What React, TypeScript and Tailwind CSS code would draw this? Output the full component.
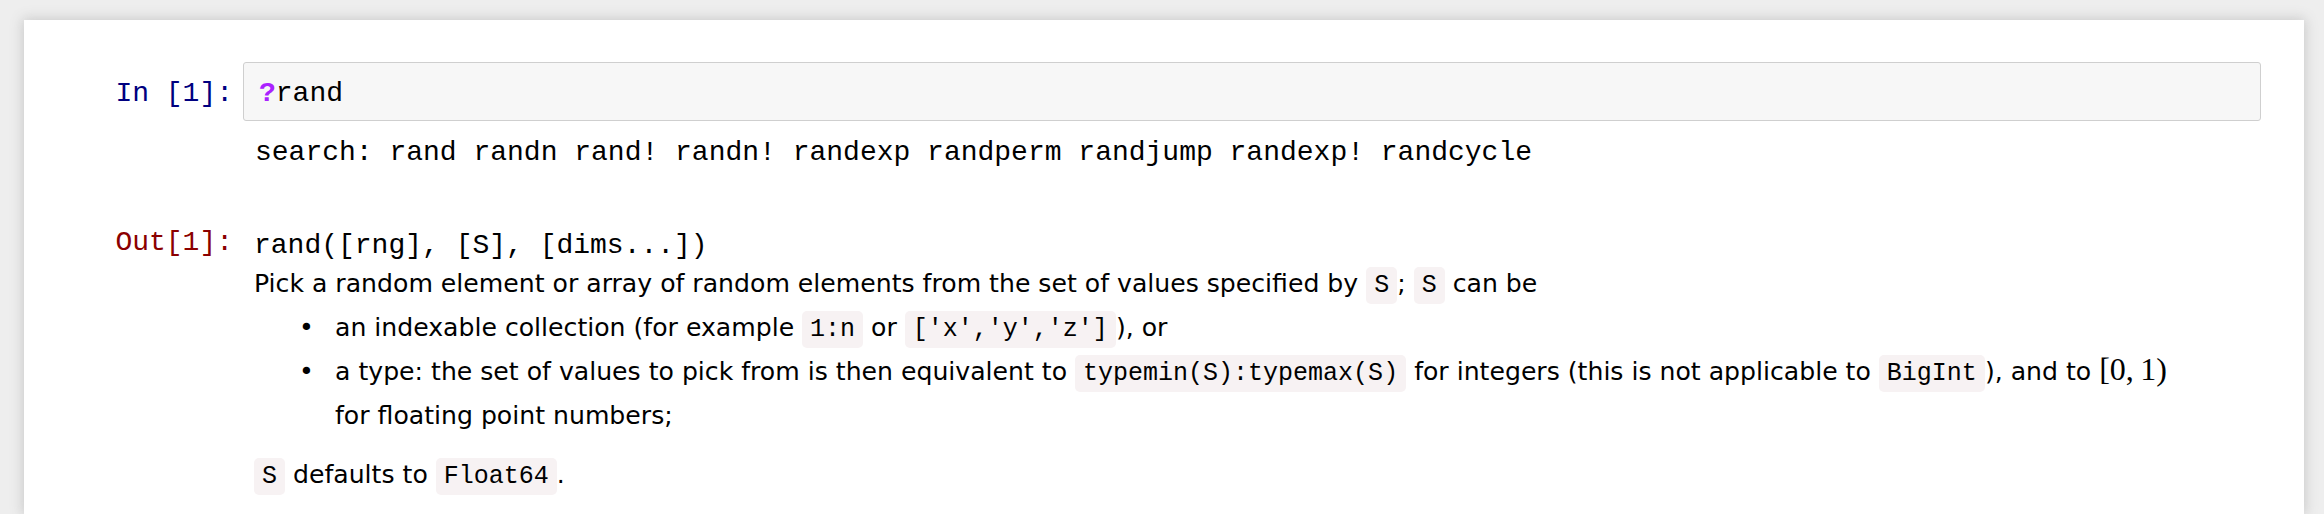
import React from "react";

const mono = "[font-family:'Liberation_Mono',monospace]";
const sans = "[font-family:'DejaVu_Sans',sans-serif]";

function Code({ children }: { children: React.ReactNode }) {
  return (
    <span className="[font-family:'Liberation_Mono',monospace] text-[25px] bg-[#f7f2f3] rounded-[5px] px-[8px] py-[4px]">
      {children}
    </span>
  );
}

export default function App() {
  return (
    <div className="h-[514px] overflow-hidden bg-[#eeeeee] pt-[20px]">
      <div className="ml-[24px] w-[2280px] h-[494px] bg-white shadow-[0_0_12px_1px_rgba(87,87,87,0.25)] pt-[42px] pr-[43px]">
        {/* Input cell */}
        <div className="flex">
          <div
            className={`w-[219px] shrink-0 pr-[10px] pt-[15px] text-right text-[28px] leading-[34px] text-[#000080] ${mono}`}
          >
            In [1]:
          </div>
          <div className="flex-1 border border-[#cfcfcf] bg-[#f7f7f7] rounded-[3px] pl-[15px] pt-[14px] pb-[9px]">
            <div className={`text-[28px] leading-[34px] text-black ${mono}`}>
              <span className="font-bold text-[#aa22ff]">?</span>rand
            </div>
          </div>
        </div>

        {/* stream output */}
        <div className="flex mt-[15px]">
          <div className="w-[219px] shrink-0" />
          <div className={`pl-[12px] text-[28px] leading-[34px] text-black ${mono}`}>
            search: rand randn rand! randn! randexp randperm randjump randexp! randcycle
          </div>
        </div>

        {/* Out cell */}
        <div className="flex mt-[59px]">
          <div
            className={`w-[219px] shrink-0 pr-[10px] -mt-[3px] text-right text-[28px] leading-[34px] text-[#8b0000] ${mono}`}
          >
            Out[1]:
          </div>
          <div className="flex-1 pl-[11px] text-black">
            <div className={`text-[28px] leading-[34px] ${mono}`}>rand([rng], [S], [dims...])</div>
            <div className={`text-[25.15px] leading-[42px] ${sans}`}>
              <p>
                Pick a random element or array of random elements from the set of values specified by <Code>S</Code>; <Code>S</Code> can be
              </p>
              <ul className="ml-[45px]">
                <li className="flex">
                  <span className="w-[36px] shrink-0">•</span>
                  <span>
                    an indexable collection (for example <Code>1:n</Code> or <Code>['x','y','z']</Code>), or
                  </span>
                </li>
                <li className="flex">
                  <span className="w-[36px] shrink-0">•</span>
                  <span>
                    a type: the set of values to pick from is then equivalent to <Code>typemin(S):typemax(S)</Code> for integers (this is not applicable to <Code>BigInt</Code>), and to{" "}
                    <span className="[font-family:'Liberation_Serif',serif] text-[32px] leading-[30px]">[0,&thinsp;1)</span>
                    <br />
                    for floating point numbers;
                  </span>
                </li>
              </ul>
              <p className="mt-[17px]">
                <Code>S</Code> defaults to <Code>Float64</Code>.
              </p>
            </div>
          </div>
        </div>
      </div>
    </div>
  );
}
